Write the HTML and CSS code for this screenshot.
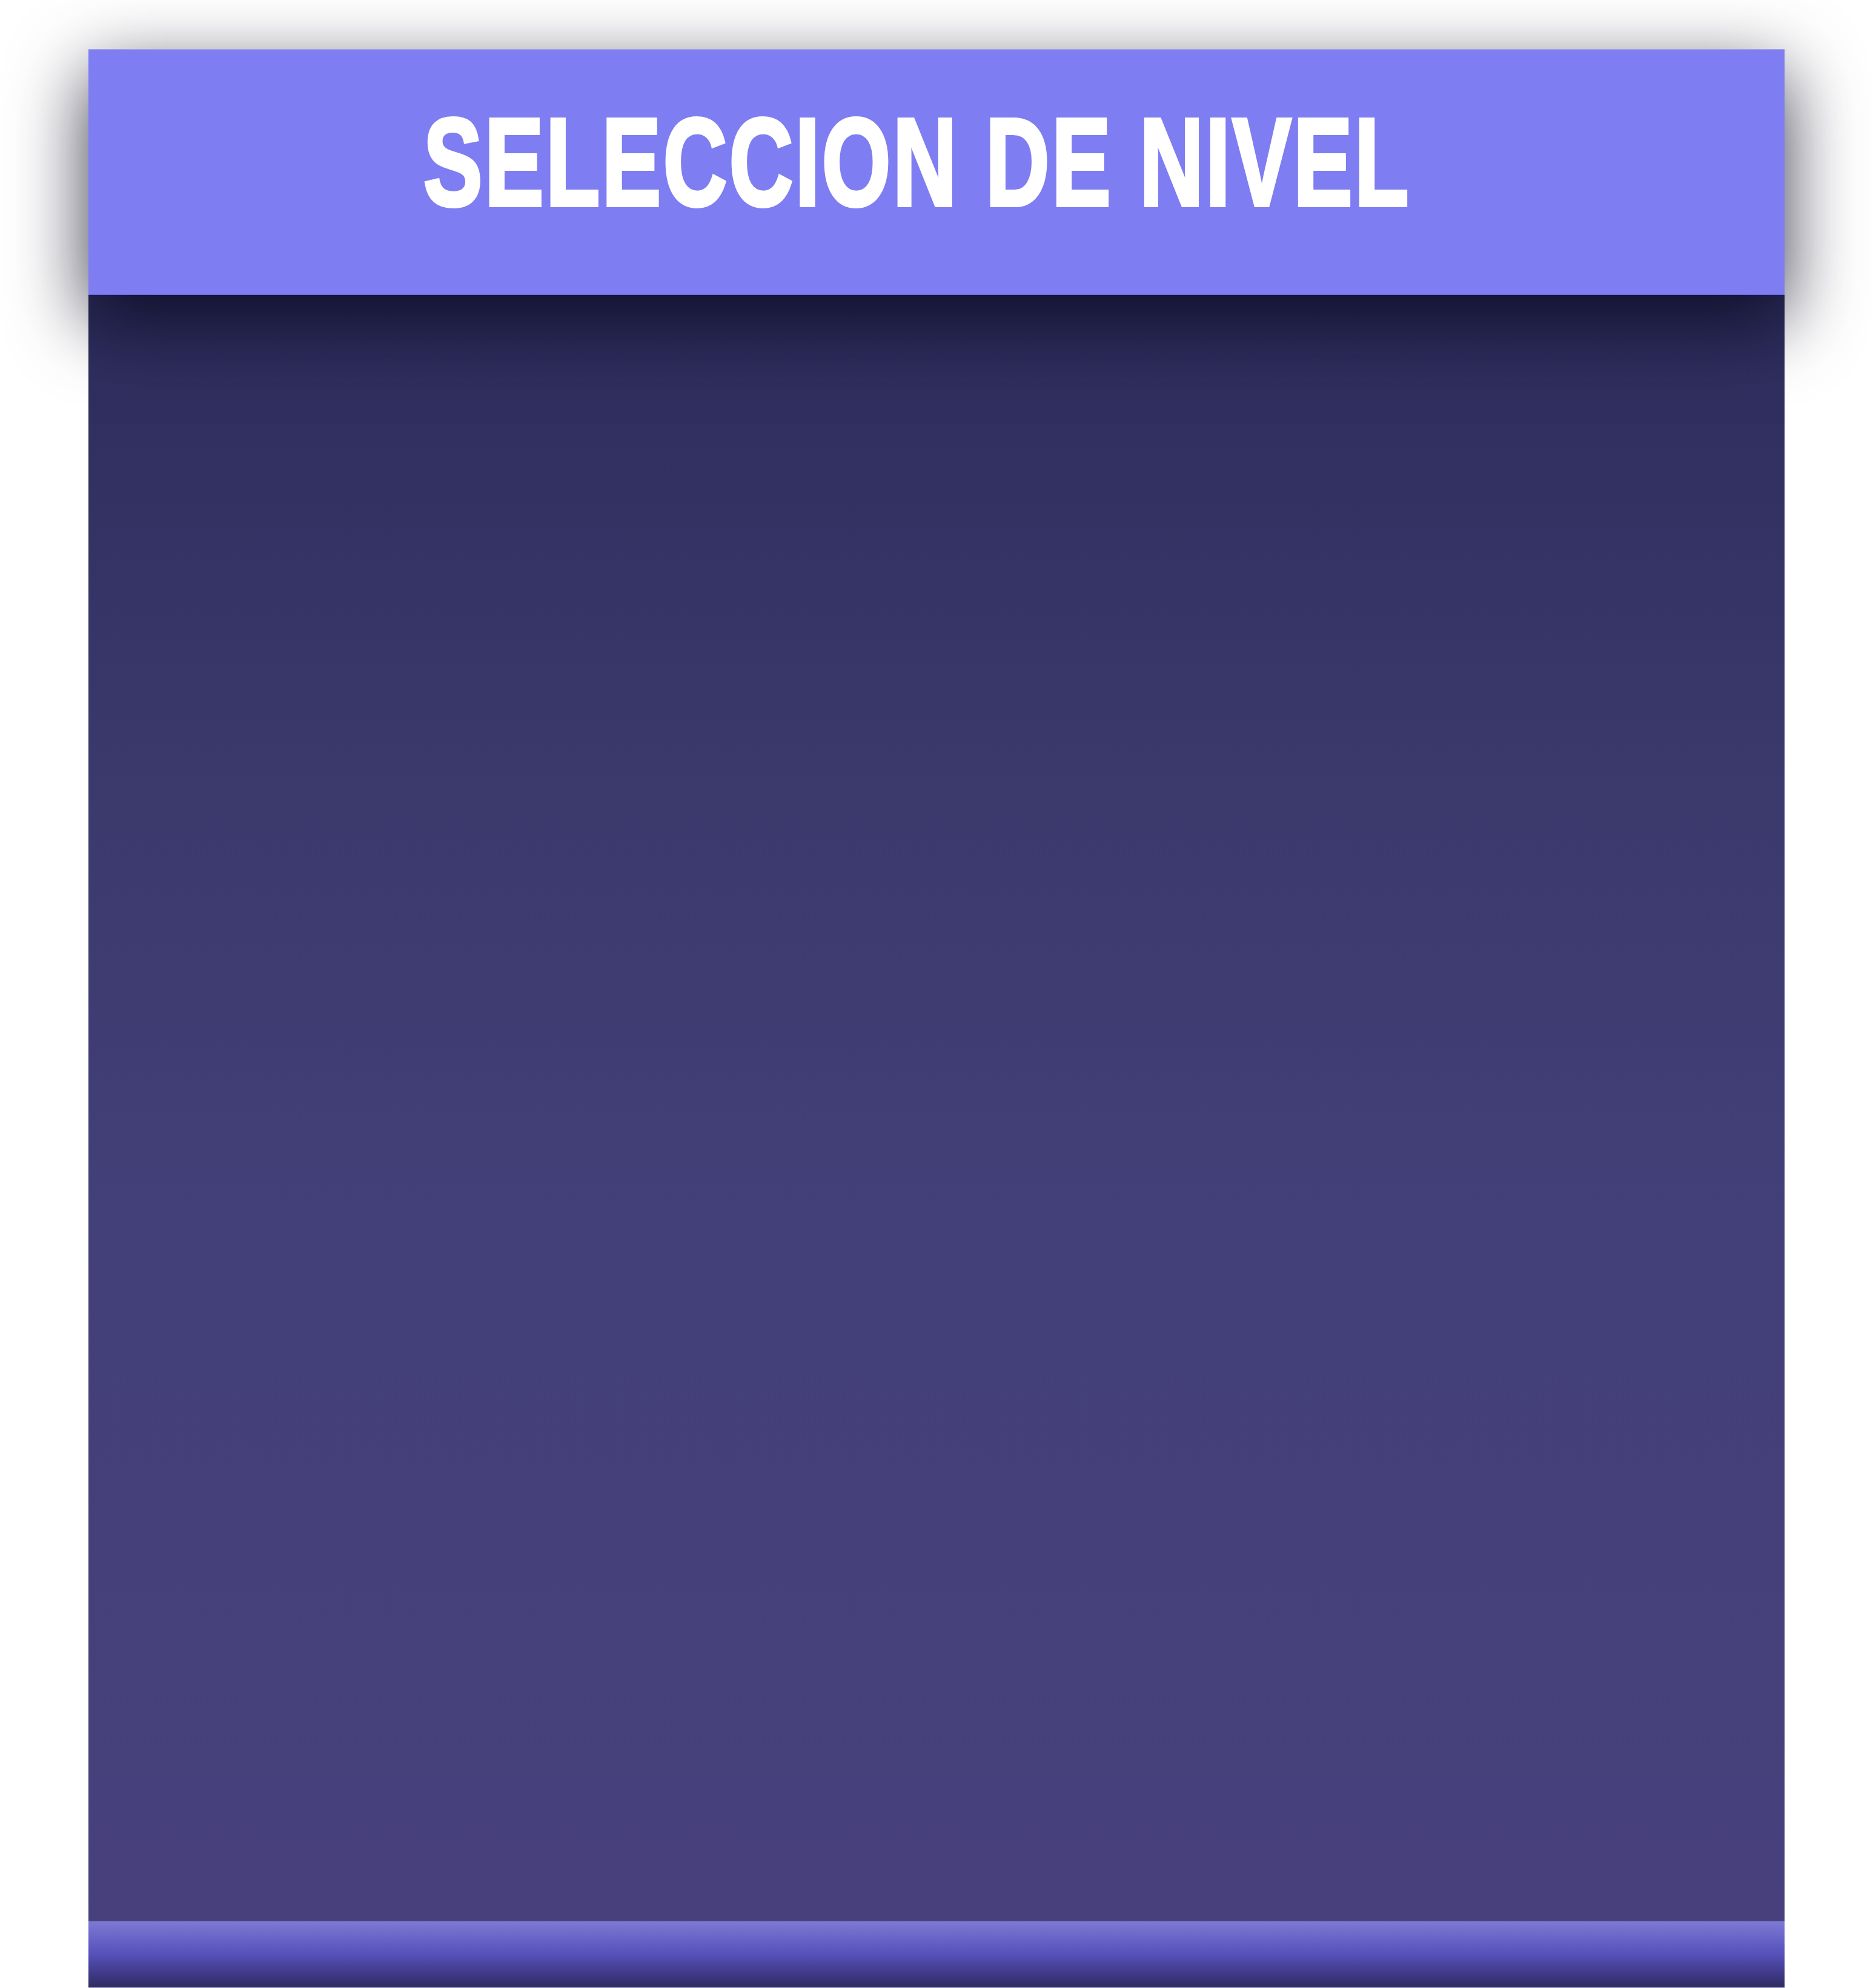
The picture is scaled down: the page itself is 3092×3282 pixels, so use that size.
FILE: index.html
```html
<!DOCTYPE html>
<html lang="es">
<head>
<meta charset="utf-8">
<title>Seleccion de nivel</title>
<link rel="stylesheet" href="styles.css">
</head>
<body>
<div class="panel">
  <header class="panel-header">
    <h1 class="title">SELECCION DE NIVEL</h1>
  </header>
  <main class="panel-body"></main>
  <footer class="panel-footer"></footer>
</div>
</body>
</html>
```

FILE: styles.css
```css
html, body {
  margin: 0;
  padding: 0;
  background: #ffffff;
}

body {
  width: 3092px;
  height: 3282px;
  overflow: hidden;
  font-family: "Liberation Sans", Arial, sans-serif;
}

.panel {
  margin: 81px 0 0 146px;
  width: 2800px;
  height: 3201px;
  display: flex;
  flex-direction: column;
}

.panel-header {
  position: relative;
  z-index: 1;
  box-sizing: border-box;
  height: 406px;
  flex: none;
  background: #7e7df1;
  border-top: 1px solid #a6a5e8;
  border-bottom: 2px solid #6c6ae6;
  box-shadow: 0 40px 115px rgba(8, 8, 30, 0.8);
  padding: 83px 0 0 553px;
}

.title {
  margin: 0;
  display: inline-block;
  font-family: "Liberation Sans", Arial, sans-serif;
  font-weight: 700;
  font-size: 206px;
  line-height: 1;
  letter-spacing: 5px;
  color: #ffffff;
  -webkit-text-stroke: 6px #ffffff;
  white-space: nowrap;
  transform: scaleX(0.709);
  transform-origin: left top;
}

.panel-body {
  flex: 1;
  background: linear-gradient(180deg, #2d2c5b 0%, #3a386b 27%, #433f78 56%, #47407c 100%);
}

.panel-footer {
  flex: none;
  box-sizing: border-box;
  height: 111px;
  border-top: 1px solid #5b5794;
  border-bottom: 1px solid #b9b7d6;
  background: linear-gradient(180deg, #7d79d2 0%, #6561c6 30%, #5650ba 50%, #423d8e 75%, #2f2b62 100%);
}
```
